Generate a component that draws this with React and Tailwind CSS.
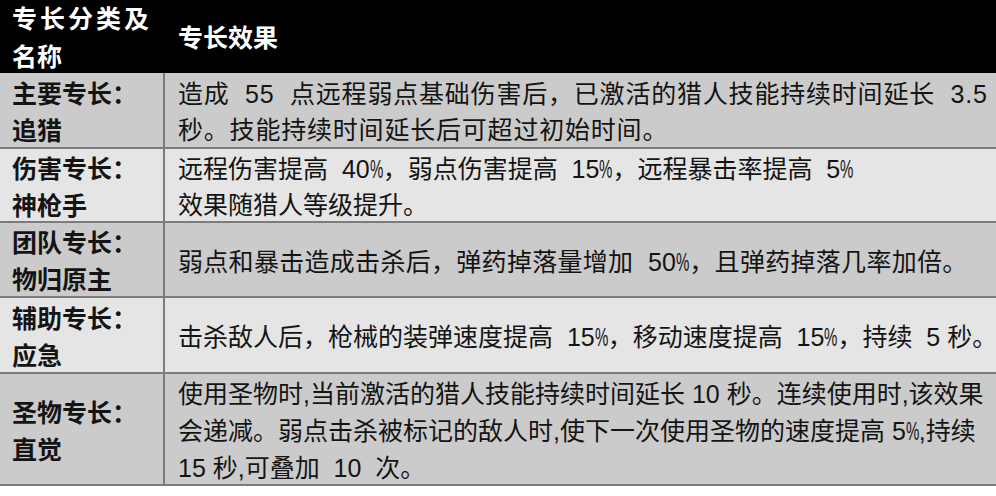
import React from "react";

const P = () => (
  <span className="inline-block w-[13px] origin-left scale-x-[0.6]">%</span>
);

const rows = [
  {
    bg: "bg-[#cbcbcb]",
    h: "h-[76px]",
    lead: "leading-[36px]",
    track: "tracking-[0.8px]",
    label: ["主要专长：", "追猎"],
    lines: [
      ["造成  55  点远程弱点基础伤害后，已激活的猎人技能持续时间延长  3.5"],
      ["秒。技能持续时间延长后可超过初始时间。"],
    ],
  },
  {
    bg: "bg-[#e5e5e5]",
    h: "h-[74px]",
    lead: "leading-[36px]",
    track: "",
    label: ["伤害专长：", "神枪手"],
    lines: [
      ["远程伤害提高  40", <P key="a" />, "，弱点伤害提高  15", <P key="b" />, "，远程暴击率提高  5", <P key="c" />],
      ["效果随猎人等级提升。"],
    ],
  },
  {
    bg: "bg-[#cbcbcb]",
    h: "h-[75px]",
    lead: "leading-[36px]",
    track: "tracking-[0.3px]",
    label: ["团队专长：", "物归原主"],
    lines: [["弱点和暴击造成击杀后，弹药掉落量增加  50", <P key="a" />, "，且弹药掉落几率加倍。"]],
  },
  {
    bg: "bg-[#e5e5e5]",
    h: "h-[76px]",
    lead: "leading-[36px]",
    track: "",
    label: ["辅助专长：", "应急"],
    lines: [
      ["击杀敌人后，枪械的装弹速度提高  15", <P key="a" />, "，移动速度提高  15", <P key="b" />, "，持续  5 秒。"],
    ],
  },
  {
    bg: "bg-[#cbcbcb]",
    h: "h-[112px]",
    lead: "leading-[37px]",
    track: "",
    label: ["圣物专长：", "直觉"],
    lines: [
      ["使用圣物时,当前激活的猎人技能持续时间延长 10 秒。连续使用时,该效果"],
      ["会递减。弱点击杀被标记的敌人时,使下一次使用圣物的速度提高 5", <P key="a" />, ",持续"],
      ["15 秒,可叠加  10  次。"],
    ],
  },
];

export default function App() {
  return (
    <div
      className="w-[996px] h-[496px] overflow-hidden bg-white text-[#141414]"
      style={{ fontFamily: '"Liberation Sans", "Noto Sans CJK SC", sans-serif' }}
    >
      <div className="flex h-[73px] bg-black text-white font-bold text-[25px] leading-[38px]">
        <div className="w-[165px] shrink-0 pl-[12px] pt-[2px] flex flex-col justify-center">
          <div className="tracking-[3px] whitespace-nowrap">专长分类及</div>
          <div>名称</div>
        </div>
        <div className="flex-1 pl-[13px] pt-[2px] flex items-center">专长效果</div>
      </div>
      {rows.map((r, i) => (
        <div key={i} className={`flex ${r.h} border-b-2 border-[#7c7c7c] ${r.bg}`}>
          <div className="w-[165px] shrink-0 border-r-2 border-[#7c7c7c] pl-[12px] pt-[5px] flex flex-col justify-center font-bold text-[25px] leading-[37px]">
            {r.label.map((l, j) => (
              <div key={j} className="whitespace-nowrap">{l}</div>
            ))}
          </div>
          <div className={`flex-1 pl-[13px] pt-[4px] flex flex-col justify-center text-[25px] ${r.lead} ${r.track}`}>
            {r.lines.map((l, j) => (
              <div key={j} className="whitespace-pre">{l}</div>
            ))}
          </div>
        </div>
      ))}
    </div>
  );
}
